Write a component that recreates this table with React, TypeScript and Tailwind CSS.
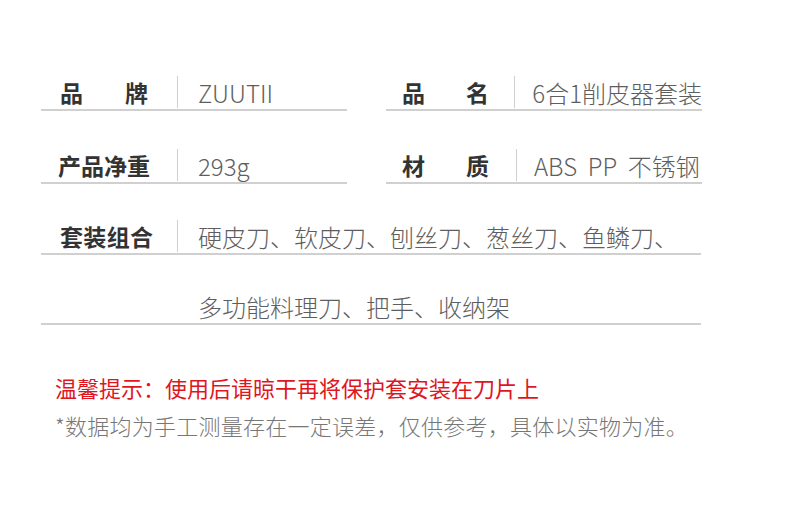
const font = { fontFamily: '"Noto Sans CJK SC", "Noto Sans", sans-serif' };

// Two-character labels are spread across the label column
function Label({ text, width }: { text: string; width: string }) {
  const chars = text.split("");
  return (
    <div className={`flex justify-between ${width} text-[23px] font-bold text-[#333333] leading-none`}>
      {chars.map((c, i) => (
        <span key={i}>{c}</span>
      ))}
    </div>
  );
}

function Cell({
  label,
  value,
  labelBox,
  labelWidth,
  labelPad,
  valuePad,
  width,
}: {
  label: string;
  value: string;
  labelBox: string;
  labelWidth: string;
  labelPad: string;
  valuePad: string;
  width: string;
}) {
  return (
    <div className={`flex items-stretch h-[35px] border-b-2 border-[#d0d0d0] ${width}`}>
      <div className={`flex items-center ${labelBox} ${labelPad} border-r border-[#cfcfcf] mb-[1px]`}>
        <Label text={label} width={labelWidth} />
      </div>
      <div className={`flex items-center ${valuePad} text-[24px] font-extralight text-[#5e5e5e] leading-none whitespace-pre`}>
        {value}
      </div>
    </div>
  );
}

export default function App() {
  return (
    <div className="w-[790px] h-[527px] bg-white overflow-hidden" style={font}>
      <div className="pt-[76px] pl-[41px]">
        <div className="flex gap-[39px]">
          <Cell label="品牌" value="ZUUTII" labelBox="w-[137px]" labelWidth="w-[88px]" labelPad="pl-[19px]" valuePad="pl-[20px]" width="w-[306px]" />
          <Cell label="品名" value="6合1削皮器套装" labelBox="w-[131px]" labelWidth="w-[87px]" labelPad="pl-[16px]" valuePad="pl-[17px]" width="w-[316px]" />
        </div>
        <div className="flex gap-[39px] mt-[38px]">
          <Cell label="产品净重" value="293g" labelBox="w-[137px]" labelWidth="w-[92px]" labelPad="pl-[17px]" valuePad="pl-[20px]" width="w-[306px]" />
          <Cell label="材质" value="ABS  PP  不锈钢" labelBox="w-[131px]" labelWidth="w-[87px]" labelPad="pl-[16px]" valuePad="pl-[17px]" width="w-[316px]" />
        </div>
        <div className="mt-[36px]">
          <div className="flex items-stretch h-[35px] border-b-2 border-[#d0d0d0] w-[660px]">
            <div className="flex items-center w-[137px] pl-[19px] border-r border-[#cfcfcf] mb-[1px]">
              <Label text="套装组合" width="w-[93px]" />
            </div>
            <div className="flex items-center pl-[20px] text-[24px] font-extralight text-[#5e5e5e] leading-none whitespace-nowrap">
              硬皮刀、软皮刀、刨丝刀、葱丝刀、鱼鳞刀、
            </div>
          </div>
          <div className="flex items-center h-[35px] mt-[35px] border-b-2 border-[#d0d0d0] w-[660px] pl-[157px] text-[24px] font-extralight text-[#5e5e5e] leading-none whitespace-nowrap">
            多功能料理刀、把手、收纳架
          </div>
        </div>
        <div className="mt-[51px] pl-[14px] text-[22px] leading-none">
          <p className="text-[#e0161f]">温馨提示：使用后请晾干再将保护套安装在刀片上</p>
          <p className="mt-[16px] text-[#777777] font-light tracking-[0.25px]">*数据均为手工测量存在一定误差，仅供参考，具体以实物为准。</p>
        </div>
      </div>
    </div>
  );
}
